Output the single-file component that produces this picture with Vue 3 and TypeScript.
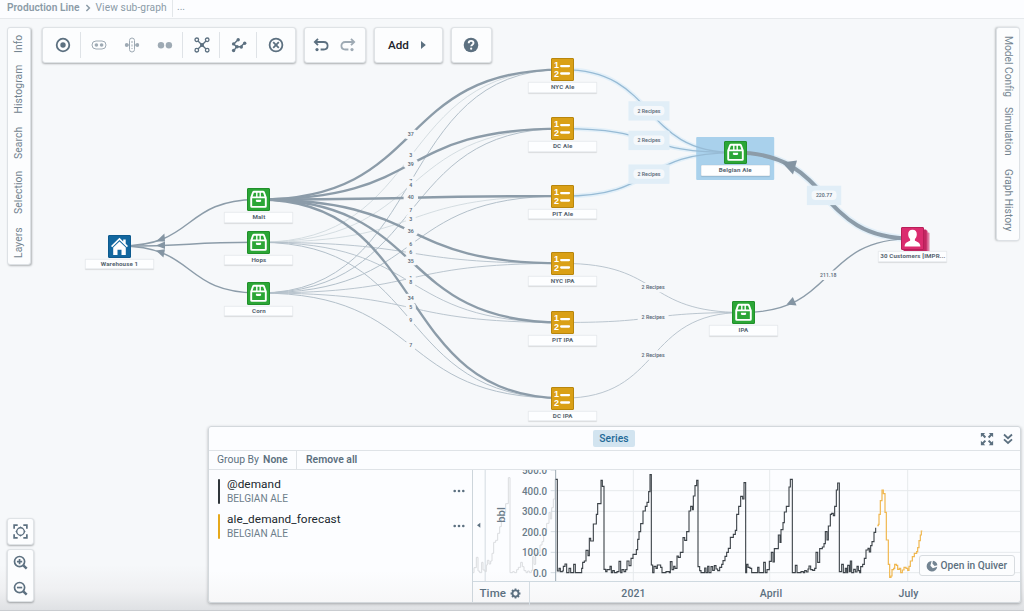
<script setup lang="ts">
type Kind = 'home' | 'box' | 'recipe' | 'user'
interface GraphNode { id: string; label: string; kind: Kind; x: number; y: number }

const nodes: GraphNode[] = [
  { id: 'wh', label: 'Warehouse 1', kind: 'home', x: 119.5, y: 246 },
  { id: 'malt', label: 'Malt', kind: 'box', x: 258.9, y: 199.5 },
  { id: 'hops', label: 'Hops', kind: 'box', x: 258.9, y: 242.3 },
  { id: 'corn', label: 'Corn', kind: 'box', x: 258.9, y: 293 },
  { id: 'nycAle', label: 'NYC Ale', kind: 'recipe', x: 562.7, y: 69.6 },
  { id: 'dcAle', label: 'DC Ale', kind: 'recipe', x: 562.7, y: 128.6 },
  { id: 'pitAle', label: 'PIT Ale', kind: 'recipe', x: 562.7, y: 196.1 },
  { id: 'nycIpa', label: 'NYC IPA', kind: 'recipe', x: 562.7, y: 263.4 },
  { id: 'pitIpa', label: 'PIT IPA', kind: 'recipe', x: 562.7, y: 322.5 },
  { id: 'dcIpa', label: 'DC IPA', kind: 'recipe', x: 562.7, y: 398.2 },
  { id: 'belgian', label: 'Belgian Ale', kind: 'box', x: 735.2, y: 152.6 },
  { id: 'ipa', label: 'IPA', kind: 'box', x: 743.5, y: 312.5 },
  { id: 'cust', label: '30 Customers [IMPR...', kind: 'user', x: 912.9, y: 238.6 },
]

interface Edge { from: string; to: string; w: number; label?: string; tone: string; glow?: boolean }
const edges: Edge[] = [
  { from: 'wh', to: 'malt', w: 1.5, tone: 'strong' },
  { from: 'wh', to: 'hops', w: 1.5, tone: 'strong' },
  { from: 'wh', to: 'corn', w: 1.5, tone: 'strong' },
  { from: 'hops', to: 'nycAle', w: 0.8, label: '3', tone: 'faint' },
  { from: 'corn', to: 'nycAle', w: 1, label: '7', tone: 'light' },
  { from: 'hops', to: 'dcAle', w: 0.8, label: '4', tone: 'faint' },
  { from: 'corn', to: 'dcAle', w: 1, label: '7', tone: 'light' },
  { from: 'hops', to: 'pitAle', w: 0.8, label: '3', tone: 'faint' },
  { from: 'corn', to: 'pitAle', w: 1, label: '6', tone: 'light' },
  { from: 'hops', to: 'nycIpa', w: 0.9, label: '6', tone: 'light' },
  { from: 'corn', to: 'nycIpa', w: 0.9, label: '1', tone: 'light' },
  { from: 'hops', to: 'pitIpa', w: 0.9, label: '8', tone: 'light' },
  { from: 'corn', to: 'pitIpa', w: 0.9, label: '5', tone: 'light' },
  { from: 'hops', to: 'dcIpa', w: 1, label: '9', tone: 'light' },
  { from: 'corn', to: 'dcIpa', w: 1, label: '7', tone: 'light' },
  { from: 'malt', to: 'nycAle', w: 2.4, label: '37', tone: 'strong' },
  { from: 'malt', to: 'dcAle', w: 2.4, label: '39', tone: 'strong' },
  { from: 'malt', to: 'pitAle', w: 2.4, label: '40', tone: 'strong' },
  { from: 'malt', to: 'nycIpa', w: 2.4, label: '36', tone: 'strong' },
  { from: 'malt', to: 'pitIpa', w: 2.4, label: '35', tone: 'strong' },
  { from: 'malt', to: 'dcIpa', w: 2.4, label: '34', tone: 'strong' },
  { from: 'nycAle', to: 'belgian', w: 1.3, label: '2 Recipes', tone: 'blue', glow: true },
  { from: 'dcAle', to: 'belgian', w: 1.3, label: '2 Recipes', tone: 'blue', glow: true },
  { from: 'pitAle', to: 'belgian', w: 1.3, label: '2 Recipes', tone: 'blue', glow: true },
  { from: 'nycIpa', to: 'ipa', w: 0.9, label: '2 Recipes', tone: 'light' },
  { from: 'pitIpa', to: 'ipa', w: 0.9, label: '2 Recipes', tone: 'light' },
  { from: 'dcIpa', to: 'ipa', w: 0.9, label: '2 Recipes', tone: 'light' },
  { from: 'belgian', to: 'cust', w: 4, label: '220.77', tone: 'strong', glow: true },
  { from: 'ipa', to: 'cust', w: 1.4, label: '211.18', tone: 'strong' },
]

const byId = Object.fromEntries(nodes.map((n) => [n.id, n])) as Record<string, GraphNode>
const BEND = 0.56
const links = edges.map((e) => {
  const a = byId[e.from]
  const b = byId[e.to]
  const dx = (b.x - a.x) * BEND
  const text = e.label ?? ''
  const wide = text === '2 Recipes'
  return {
    ...e,
    text,
    wide,
    d: `M${a.x} ${a.y}C${a.x + dx} ${a.y} ${b.x - dx} ${b.y} ${b.x} ${b.y}`,
    mx: (a.x + b.x) / 2,
    my: (a.y + b.y) / 2 - 0.5,
    half: wide ? 15.5 : text.length > 2 ? 12.5 : text.length === 2 ? 7.2 : 5,
    tl: wide ? 23 : text.length === 6 ? 16.3 : text.length === 2 ? 6 : 3,
  }
})
const glowing = links.filter((l) => l.glow)
const labelled = links.filter((l) => l.text)
const arrows = [
  '156,241.6 164.4,233.4 165,241.6',
  '156,245.5 165,241.4 165,249',
  '156,250.4 165,249.2 163.4,257.6',
  '782,162.5 797,160.6 793,174.4',
  '786.5,304.4 792.8,297 796.6,305.4',
]

const leftTabs = [
  { t: 'Info', h: 17 }, { t: 'Histogram', h: 47.5 }, { t: 'Search', h: 32 }, { t: 'Selection', h: 42 }, { t: 'Layers', h: 31 },
]
const rightTabs = [
  { t: 'Model Config', h: 58.5 }, { t: 'Simulation', h: 49 }, { t: 'Graph History', h: 63 },
]
const series = [
  { name: '@demand', item: 'BELGIAN ALE', cls: 'dark' },
  { name: 'ale_demand_forecast', item: 'BELGIAN ALE', cls: 'gold' },
]

/* Each pair is the x where a step starts and its height on the plot grid. */
type Step = [number, number]
const stepPath = (pts: Step[]): string =>
  `M${pts[0][0]} ${pts[0][1]}` + pts.slice(1).map(([x, y]) => `H${x}V${y}`).join('')

const past: Step[] = [
  [39, 443], [42, 428], [49, 397], [54, 438], [59, 443], [65, 412], [69, 435], [75, 440], [79, 420], [82, 406], [87, 417],
  [92, 408], [96, 385], [101, 352], [107, 346], [113, 325], [119, 305], [124, 280], [130, 262], [137, 236], [145, 158],
  [150, 443], [158, 440], [163, 443], [170, 434], [175, 427], [182, 412], [187, 425], [192, 437], [198, 443], [203, 438],
  [208, 443], [214, 436], [218, 395], [222, 418], [227, 387], [234, 383], [240, 360], [246, 350], [251, 330], [257, 320],
  [260, 295], [267, 262], [271, 282], [275, 248], [280, 222], [285, 163], [289, 163],
]
const demand: Step[] = [
  [287, 163], [292, 438], [297, 430], [301, 440], [307, 438], [310, 424], [315, 417], [320, 443], [327, 430], [332, 443],
  [337, 443], [341, 418], [346, 443], [365, 430], [368, 412], [373, 408], [378, 376], [384, 392], [388, 340], [392, 348],
  [400, 297], [409, 268], [413, 236], [423, 166], [427, 184], [432, 433], [437, 440], [441, 434], [450, 424], [454, 443],
  [458, 437], [463, 443], [471, 440], [477, 409], [482, 443], [486, 434], [492, 440], [497, 434], [501, 408], [507, 422],
  [513, 400], [519, 388], [529, 374], [533, 343], [537, 320], [542, 296], [549, 258], [556, 244], [561, 232], [566, 200],
  [570, 149], [574, 420], [578, 443], [582, 424], [588, 430], [592, 420], [602, 427], [606, 443], [618, 440], [628, 443],
  [631, 410], [636, 434], [641, 424], [645, 430], [651, 393], [655, 397], [661, 382], [669, 338], [674, 346], [680, 320],
  [687, 258], [692, 244], [697, 254], [700, 213], [705, 182], [710, 166], [714, 425], [719, 437], [723, 443], [734, 429],
  [738, 443], [743, 424], [747, 443], [753, 425], [758, 436], [763, 422], [768, 432], [773, 437], [779, 427], [785, 418],
  [789, 407], [795, 394], [800, 382], [805, 370], [811, 337], [820, 328], [826, 316], [830, 268], [836, 244], [842, 214],
  [848, 222], [852, 173], [857, 443], [860, 418], [864, 427], [870, 430], [875, 443], [893, 427], [897, 443], [911, 412],
  [916, 443], [921, 434], [928, 409], [934, 382], [939, 411], [943, 371], [955, 330], [960, 352], [963, 314], [969, 293],
  [973, 261], [979, 244], [987, 186], [991, 163], [997, 443], [1006, 421], [1011, 443], [1023, 440], [1030, 443],
  [1034, 437], [1039, 441], [1044, 432], [1047, 423], [1052, 434], [1058, 436], [1064, 430], [1068, 382], [1073, 412],
  [1079, 371], [1087, 366], [1092, 356], [1096, 320], [1101, 345], [1105, 303], [1111, 268], [1115, 265], [1120, 272],
  [1124, 244], [1129, 195], [1133, 174], [1138, 440], [1145, 418], [1150, 443], [1156, 430], [1160, 443], [1163, 421],
  [1168, 440], [1171, 408], [1175, 443], [1181, 433], [1186, 441], [1191, 424], [1195, 437], [1199, 443], [1202, 425],
  [1208, 418], [1213, 400], [1218, 375], [1224, 370], [1228, 381], [1232, 362], [1236, 350], [1242, 322], [1247, 308],
]
const forecast: Step[] = [
  [1252, 302], [1255, 298], [1257, 268], [1261, 227], [1266, 195], [1270, 206], [1275, 262], [1279, 345], [1285, 418],
  [1289, 457], [1293, 453], [1296, 434], [1301, 430], [1304, 418], [1309, 421], [1313, 433], [1318, 430], [1322, 443],
  [1327, 435], [1332, 427], [1338, 430], [1343, 436], [1347, 424], [1351, 408], [1357, 395], [1363, 385], [1370, 380],
  [1373, 368], [1377, 347], [1381, 330], [1384, 318], [1387, 318],
]
const yTicks = [
  { y: 135.5, t: '500.0' }, { y: 197, t: '400.0' }, { y: 259, t: '300.0' },
  { y: 320, t: '200.0' }, { y: 382, t: '100.0' }, { y: 443, t: '0.0' },
]
const xGrid = [520, 929, 1343]
</script>

<template>
  <div class="app">
    <header class="crumbs">
      <span class="bold c1">Production Line</span>
      <svg class="chev" viewBox="0 0 6 8"><path d="M1.4 1l3 3-3 3" /></svg>
      <span class="c2">View sub-graph</span>
      <span class="more">...</span>
    </header>

    <main class="canvas">
      <svg class="wires" viewBox="0 0 1024 611">
        <path v-for="(l, i) in glowing" :key="'g' + i" :d="l.d" class="halo" :stroke-width="l.w + 3.2" />
        <rect class="selection" x="696.200" y="137" width="78" height="43" rx="1" />
        <path v-for="(l, i) in links" :key="i" :d="l.d" :class="['edge', l.tone]" :stroke-width="l.w" />
        <polygon v-for="a in arrows" :key="a" :points="a" class="arrow" />
        <g v-for="(l, i) in labelled" :key="'t' + i">
          <rect v-if="l.glow" class="plate" :x="l.mx - (l.wide ? 20.5 : 17.2)" :y="l.my - 9.4" :width="l.wide ? 41 : 34.4" height="19.4" />
          <rect class="pill" :class="{ lit: l.glow }" :x="l.mx - l.half" :y="l.my - 4.5" :width="l.half * 2" height="9.4" rx="4" />
          <text class="wt" :x="l.mx" :y="l.my + 2" text-anchor="middle" :textLength="l.tl" lengthAdjust="spacingAndGlyphs">{{ l.text }}</text>
        </g>
      </svg>

      <div v-for="n in nodes" :key="n.id" :class="['node', n.kind]" :style="{ left: n.x + 'px', top: n.y + 'px' }">
        <div class="glyph">
          <svg v-if="n.kind === 'home'" viewBox="0 0 23 23">
            <path fill="#fff" d="M11.500 2.800L3 11l1.200 1.200 7.300-7.100 7.300 7.100L20 11l-2.300-2.300V4.400h-2.500v2z" />
            <path fill="#fff" d="M11.500 6.400L5.200 12.400v7.600h4.300v-5.300h4V20h4.300v-7.600z" />
          </svg>
          <svg v-else-if="n.kind === 'box'" viewBox="0 0 23 23">
            <path fill="none" stroke="#fff" stroke-width="1.900" stroke-linejoin="round" d="M4.200 9.600L6.100 4.200q.3-.4.800-.4h9.200q.5 0 .8.400l1.900 5.400v8.600q0 .7-.7.700H4.900q-.7 0-.7-.7zM4.200 9.400h14.600" />
            <path stroke="#fff" stroke-width="1.400" d="M9.800 4v5M13.200 4v5" />
            <path fill="#fff" d="M8.900 11.700h5.200v1.900q-2.600 1-5.200 0z" />
          </svg>
          <svg v-else-if="n.kind === 'recipe'" viewBox="0 0 23 23">
            <text x="5.400" y="10.300" text-anchor="middle" class="num">1</text>
            <text x="5.400" y="19" text-anchor="middle" class="num">2</text>
            <path stroke="#fff" stroke-width="2.300" stroke-linecap="round" d="M10.200 8.100h7.800M10.200 15.500h7.800" />
          </svg>
          <svg v-else viewBox="0 0 23 23">
            <path fill="#fff" d="M11.500 2.800c2.900 0 4.400 2 4.300 4.600-.1 2.200-.9 3.600-1.900 4.700v1.600c2 1 5.300 1.500 5.500 5.800H3.600c.2-4.300 3.500-4.800 5.500-5.800v-1.600C8.100 11 7.300 9.600 7.200 7.400c-.1-2.600 1.400-4.600 4.300-4.600z" />
          </svg>
        </div>
        <div class="tag">{{ n.label }}</div>
      </div>
    </main>

    <nav class="rail left">
      <span v-for="t in leftTabs" :key="t.t" :style="{ height: t.h + 'px' }">{{ t.t }}</span>
    </nav>
    <nav class="rail right">
      <span v-for="t in rightTabs" :key="t.t" :style="{ height: t.h + 'px' }">{{ t.t }}</span>
    </nav>

    <div class="toolbars">
      <div class="card tools">
        <div class="cell first"><svg viewBox="0 0 16 16"><circle cx="8" cy="8" r="6.300" class="ln w2" /><circle cx="8" cy="8" r="2.700" class="fl" /></svg></div>
        <div class="cell trio">
          <svg viewBox="0 0 16 16"><rect x="1" y="4" width="14" height="8" rx="4" class="ln" /><circle cx="5.400" cy="8" r="1.800" class="fl" /><circle cx="10.600" cy="8" r="1.800" class="fl" /></svg>
          <svg viewBox="0 0 16 16"><rect x="5.500" y="1" width="5" height="14" rx="2.500" class="ln" /><path d="M3 8h2M11 8h2M8 4v8" class="ln" stroke-dasharray="2 1.500" /><circle cx="2.700" cy="8" r="1.900" class="fl" /><circle cx="13.300" cy="8" r="1.900" class="fl" /></svg>
          <svg viewBox="0 0 16 16"><circle cx="4" cy="8.200" r="3.200" class="fl" /><circle cx="11.900" cy="8.200" r="3.200" class="fl" /></svg>
        </div>
        <div class="cell w37"><svg viewBox="0 0 16 16"><path d="M3.500 3.500l9 9M12.500 3.500l-9 9" class="ln w15" /><g class="ln hollow"><circle cx="2.800" cy="2.800" r="1.800" /><circle cx="13.200" cy="2.800" r="1.800" /><circle cx="2.800" cy="13.200" r="1.800" /><circle cx="13.200" cy="13.200" r="1.800" /></g><circle cx="8" cy="8" r="2" class="fl" /></svg></div>
        <div class="cell w37"><svg viewBox="0 0 16 16"><path d="M7 2.800L2.800 7l2.700 2.800-2.800 4M5.500 9.800h4.300l3.600-3.800" class="ln w15" /><g class="fl"><circle cx="7.200" cy="2.700" r="1.700" /><circle cx="2.600" cy="6.900" r="1.700" /><circle cx="6" cy="9.800" r="1.800" /><circle cx="2.600" cy="13.500" r="1.700" /><circle cx="10.300" cy="10" r="1.700" /><circle cx="13.700" cy="6.200" r="1.700" /></g></svg></div>
        <div class="cell w37"><svg viewBox="0 0 16 16"><circle cx="8" cy="8" r="6.400" class="ln w2" /><path d="M5.200 5.200l5.600 5.600M10.800 5.200l-5.600 5.600" class="ln w2" /></svg></div>
      </div>
      <div class="card hist">
        <svg viewBox="0 0 16 16"><path d="M5 1.800L1.800 5 5 8.200M2.200 5h8.500c2.500 0 3.900 1.500 3.900 3.800s-1.500 3.700-3.900 3.700H7.600" class="ln w2" /><circle cx="4" cy="12.600" r="1.600" class="fl" /></svg>
        <svg class="dim" viewBox="0 0 16 16"><path d="M11 1.800L14.200 5 11 8.200M13.800 5H5.300C2.800 5 1.400 6.500 1.400 8.800s1.500 3.700 3.900 3.700h3.100" class="ln w2" /><circle cx="12" cy="12.600" r="1.600" class="fl" /></svg>
      </div>
      <div class="card add"><span>Add</span><svg viewBox="0 0 5 8"><path d="M0 0l4.800 4L0 8z" class="fl" /></svg></div>
      <div class="card help"><svg viewBox="0 0 16 16"><circle cx="8" cy="8" r="7.300" class="fl" /><path d="M5.700 6.200c0-1.600 1-2.300 2.400-2.300s2.400.8 2.400 2.100c0 1.700-2.300 1.700-2.300 3.300" class="mark" /><circle cx="8.150" cy="11.700" r="1.100" fill="#fff" /></svg></div>
    </div>

    <div class="zoomers">
      <div class="card"><svg viewBox="0 0 16 16"><path d="M1.200 5V1.200H5M11 1.200h3.800V5M14.800 11v3.800H11M5 14.800H1.200V11" class="ln w2" /><circle cx="8" cy="8" r="4" class="ln w15" /><path d="M6.500 4.200L8 2.500l1.500 1.700zM6.500 11.800L8 13.500l1.500-1.700zM4.200 6.500L2.500 8l1.700 1.500zM11.800 6.500L13.500 8l-1.700 1.500z" class="fl" /></svg></div>
      <div class="card two">
        <svg viewBox="0 0 16 16"><circle cx="7" cy="7" r="5.400" class="ln w2" /><path d="M11 11l3.600 3.600" class="ln w3" /><path d="M7 4.200v5.600M4.200 7h5.600" class="ln w2" /></svg>
        <svg viewBox="0 0 16 16"><circle cx="7" cy="7" r="5.400" class="ln w2" /><path d="M11 11l3.600 3.600" class="ln w3" /><path d="M4.200 7h5.600" class="ln w2" /></svg>
      </div>
    </div>

    <section class="panel">
      <div class="head">
        <span class="chip">Series</span>
        <div class="acts">
          <svg viewBox="0 0 16 16"><path d="M1 6V1h5L4.300 2.700 7 5.300 5.300 7 2.700 4.300zM15 6V1h-5l1.700 1.700L9 5.300 10.700 7l2.600-2.700zM1 10v5h5l-1.700-1.700L7 10.700 5.300 9l-2.600 2.700zM15 10v5h-5l1.700-1.700L9 10.700 10.700 9l2.600 2.700z" class="fl" /></svg>
          <svg class="dbl" viewBox="0 0 12 12"><path d="M2 1.500l4 3.700 4-3.700M2 6.300L6 10l4-3.700" class="ln w2" /></svg>
        </div>
      </div>
      <div class="sub">
        <div class="group">Group By <b>None</b></div>
        <div class="remove">Remove all</div>
      </div>
      <div class="body">
        <div class="entries">
          <div v-for="s in series" :key="s.name" class="row">
            <i :class="s.cls"></i>
            <div class="names"><div class="name">{{ s.name }}</div><div class="item">{{ s.item }}</div></div>
            <svg class="dots" viewBox="0 0 12 4"><circle cx="1.700" cy="2" r="1.300" /><circle cx="6" cy="2" r="1.300" /><circle cx="10.300" cy="2" r="1.300" /></svg>
          </div>
        </div>
        <div class="plot">
          <svg class="chart" viewBox="39 135 1641 333" preserveAspectRatio="none">
            <path d="M75.500 135V468" class="axis" />
            <path :d="stepPath(past)" class="past" />
            <g class="grid">
              <path v-for="t in yTicks.slice(1)" :key="t.t" :d="`M287 ${t.y}H1680`" />
              <path v-for="x in xGrid" :key="x" :d="`M${x} 135V468`" />
            </g>
            <path v-for="t in yTicks" :key="'k' + t.t" :d="`M272 ${t.y}H287`" class="axis" />
            <path d="M287 135V468" class="axis strong" />
            <path d="M61 293v15l-10-7.500z" class="fl" />
            <text v-for="t in yTicks" :key="'y' + t.t" x="261" :y="t.y + 11.500" text-anchor="end" class="yt" :textLength="t.t === '0.0' ? 42 : 75" lengthAdjust="spacingAndGlyphs">{{ t.t }}</text>
            <text class="yt" transform="translate(134 270) rotate(-90)" text-anchor="middle" textLength="47" lengthAdjust="spacingAndGlyphs">bbl</text>
            <path :d="stepPath(demand)" class="demand" />
            <path :d="stepPath(forecast)" class="forecast" />
          </svg>
          <div class="xaxis">
            <div class="time">Time
              <svg viewBox="0 0 16 16"><circle cx="8" cy="8" r="4.400" class="ln w3" /><path d="M8 .8v2.600M8 12.600v2.600M.8 8h2.600M12.600 8h2.600M2.900 2.900l1.900 1.900M11.200 11.200l1.900 1.900M13.100 2.900l-1.900 1.900M4.800 11.200l-1.900 1.900" class="ln w3" /></svg>
            </div>
            <div class="months"><span>2021</span><span>April</span><span>July</span></div>
          </div>
          <button class="quiver">
            <svg viewBox="0 0 12 12"><path d="M5.600.9A5.300 5.300 0 1 0 11.200 6.800L6.800 8.200 4.400 5.800z" class="fl" /><path d="M6.900.7a5.300 5.300 0 0 1 4.500 4.500L8.600 6 6.400 3.600z" class="fl" /></svg>
            <span>Open in Quiver</span>
          </button>
        </div>
      </div>
    </section>
  </div>
</template>

<style>
html, body { margin: 0; overflow: hidden; }
</style>

<style scoped>
.app { position: relative; width: 1024px; height: 611px; overflow: hidden; font-family: Roboto, "Noto Sans", sans-serif; color: #5c7080;
  background: linear-gradient(to bottom, #f6f8fa 0, #f6f8fa 565px, #eff0f2 590px, #dfe1e4 610px, #c9ccd0 610px); }
.app * { box-sizing: border-box; }
.bold, b { font-weight: 600; }
svg { display: block; flex: none; }
.fl { fill: #5c7080; stroke: none; }
.ln { fill: none; stroke: #5c7080; stroke-width: 1; }
.w15 { stroke-width: 1.4; }
.w2 { stroke-width: 1.8; }
.w3 { stroke-width: 2.6; }
.hollow circle { fill: #fcfdfe; stroke-width: 1.3; }
.dim { opacity: 0.58; }

.crumbs { display: flex; align-items: center; height: 18.5px; border-bottom: 1px solid #e6e9ec; background: #fcfdff; color: #8b9ba7; font-size: 10.2px; line-height: 16px; padding: 0 0 2px 7px; white-space: nowrap; }
.c1 { width: 73px; letter-spacing: 0.03px; }
.c2 { width: 72px; letter-spacing: 0.1px; }
.chev { width: 6px; height: 8px; margin: 0 5px 0 4.5px; }
.chev path { fill: none; stroke: #8b9ba7; stroke-width: 1.5; }
.more { border-left: 1px solid #e3e7ea; height: 18px; padding-left: 4px; margin-left: 4.5px; }

.wires { position: absolute; left: 0; top: 0; width: 1024px; height: 611px; }
.selection { fill: #a9d1ec; }
.halo { fill: none; stroke: #e3f0f9; }
.edge { fill: none; stroke: #8c9ca9; }
.edge.light { stroke: #b3c0ca; }
.edge.faint { stroke: #ccd5db; }
.edge.blue { stroke: #97bbd5; }
.arrow { fill: #8495a3; }
.plate { fill: #e1eef7; }
.pill { fill: #f6f8fa; }
.pill.lit { fill: #f5f8fb; }
.wt { font-size: 5.4px; font-weight: 600; fill: #5f6f7c; }

.node { position: absolute; width: 0; height: 0; }
.glyph { position: absolute; left: -11.5px; top: -11.5px; width: 23px; height: 23px; border: 1px solid; border-radius: 1px; }
.glyph svg { width: 23px; height: 23px; margin: -1px; }
.home .glyph { background: #12679f; border-color: #0d5a8e; }
.box .glyph { background: #2ba636; border-color: #21902b; }
.recipe .glyph { background: #daa016; border-color: #b8860c; }
.user .glyph { background: #db2c6f; border-color: #b81e58; box-shadow: 2.5px 2.5px 0 #c22762, 4px 3px 0 -0.5px #d2457c, 5.5px 5.5px 0 #dc7da3; }
.num { font-family: "Liberation Sans", Roboto, sans-serif; font-size: 9px; font-weight: 700; fill: #fff; }
.tag { position: absolute; left: -34.5px; top: 12.5px; width: 69px; height: 10.5px; border: 1px solid #eceff2; border-radius: 1px; background: #fdfeff; box-shadow: 0 0.5px 1px rgba(16, 22, 26, 0.12); text-align: center; font-size: 6.2px; line-height: 9.2px; font-weight: 700; color: #56646f; letter-spacing: 0.12px; white-space: nowrap; }

.rail { position: absolute; top: 27px; display: flex; flex-direction: column; width: 24px; background: #fcfdfe; border: 1px solid #dde1e5; border-radius: 3px; font-size: 10.3px; color: #72838f; align-items: center; padding-top: 8px; white-space: nowrap; }
.rail span { writing-mode: vertical-rl; line-height: 14px; }
.left { left: 7px; height: 238px; box-shadow: 1px 1px 2px rgba(16, 22, 26, 0.3); gap: 13px; letter-spacing: 0.1px; }
.left span { transform: rotate(180deg); }
.right { left: 996px; height: 214px; box-shadow: -1px 0 2px rgba(16, 22, 26, 0.25); gap: 12.5px; letter-spacing: -0.02px; }

.card { background: #fcfdfe; border-radius: 3px; border: 1px solid #dfe3e6; box-shadow: 0 1px 2px rgba(16, 22, 26, 0.32); }
.toolbars { position: absolute; left: 42px; top: 27px; display: flex; gap: 8px; height: 36px; }
.toolbars .card { display: flex; align-items: center; }
.toolbars svg { width: 16px; height: 16px; }
.tools { width: 253.5px; }
.cell { display: flex; align-items: center; justify-content: center; height: 26px; border-right: 1px solid #dfe3e7; }
.cell:last-child { border: 0; }
.first { width: 38px; padding-left: 2.5px; }
.w37 { width: 37px; padding-left: 1px; }
.trio { width: 102px; gap: 17px; padding-left: 1px; }
.trio svg { opacity: 0.58; }
.hist { width: 62.5px; justify-content: center; gap: 11px; }
.add { width: 68.5px; padding-left: 13px; color: #1c252c; font-size: 11.7px; font-weight: 500; }
.add svg { width: 5px; height: 8px; margin-left: 12px; }
.help { width: 41px; justify-content: center; }
.mark { fill: none; stroke: #fff; stroke-width: 1.9; }

.zoomers { position: absolute; left: 7px; top: 518px; display: flex; flex-direction: column; gap: 4px; }
.zoomers .card { width: 27px; height: 27px; display: flex; align-items: center; justify-content: center; }
.zoomers svg { width: 15px; height: 15px; }
.zoomers .two { height: 53px; flex-direction: column; gap: 11.5px; }

.panel { position: absolute; left: 208px; top: 426px; width: 813px; height: 177px; background: linear-gradient(to bottom, #fcfdff 82%, #f7f7f8); border: 1px solid #d3d8dc; border-radius: 3px; box-shadow: 0 1px 3px rgba(16, 22, 26, 0.3); display: flex; flex-direction: column; }
.head { flex: none; height: 24px; border-bottom: 1px solid #dfe3e7; display: flex; justify-content: center; padding: 3px 1px 0 0; position: relative; }
.chip { height: 17px; width: 42px; border-radius: 2px; background: #d2e4f0; color: #1f6997; font-size: 10.3px; font-weight: 500; line-height: 17px; text-align: center; letter-spacing: 0.1px; }
.acts { position: absolute; right: 6px; top: 5px; display: flex; gap: 8px; align-items: center; }
.acts svg { width: 14px; height: 14px; }
.acts .dbl { width: 12px; height: 12px; }
.sub { flex: none; height: 19px; border-bottom: 1px solid #dfe3e7; display: flex; font-size: 10.4px; line-height: 18px; white-space: nowrap; }
.group { width: 87.5px; padding-left: 8px; border-right: 1px solid #dfe3e7; }
.group b { margin-left: 1.5px; }
.remove { padding-left: 9.5px; font-weight: 600; }
.body { flex: 1; display: flex; min-height: 0; }
.entries { width: 263.5px; border-right: 1px solid #cdd5db; padding: 6px 7px 0 9px; }
.row { display: flex; height: 35.3px; padding-top: 0.5px; }
.row i { width: 2px; height: 25px; margin-top: 2px; border-radius: 1px; }
i.dark { background: #30363b; }
i.gold { background: #e6a91c; }
.names { flex: 1; padding-left: 7px; white-space: nowrap; }
.name { font-size: 11.8px; line-height: 14px; color: #20282e; letter-spacing: 0.06px; }
.item { font-size: 10.1px; line-height: 15px; color: #6d7e8b; }
.dots { width: 12px; height: 4px; margin-top: 12px; fill: #5c7080; }

.plot { position: relative; width: 547px; display: flex; flex-direction: column; }
.chart { width: 547px; height: 111px; overflow: hidden; }
.chart path { fill: none; vector-effect: non-scaling-stroke; }
.chart path.fl { fill: #5c7080; }
.axis { stroke: #d3dbe1; stroke-width: 1; }
.axis.strong { stroke: #9daab4; }
.grid path { stroke: #e6eaed; stroke-width: 1; }
.past { stroke: #dadcdf; stroke-width: 1; }
.demand { stroke: #3b4248; stroke-width: 1.1; }
.forecast { stroke: #f0b850; stroke-width: 1.2; }
.yt { font-size: 32px; font-weight: 500; fill: #6a7b88; }
.xaxis { display: flex; flex: 1; border-top: 1px solid #cfd9e0; font-size: 10.5px; font-weight: 500; line-height: 23px; }
.time { width: 57px; border-right: 1px solid #d5dde3; display: flex; align-items: center; gap: 4px; padding-left: 7px; font-size: 11.5px; letter-spacing: 0.1px; }
.time svg { width: 11px; height: 11px; }
.months { display: grid; grid-template-columns: 40px 40px 40px; column-gap: 97.5px; padding-left: 84px; flex: 1; text-align: center; letter-spacing: 0.1px; }
.quiver { position: absolute; left: 446px; top: 85px; width: 96px; height: 21px; background: #fcfdfe; border: 1px solid #d8dce0; border-radius: 3px; display: flex; align-items: center; padding: 0 0 0 6px; gap: 3px; font: 500 10.2px Roboto, sans-serif; color: #5c7080; white-space: nowrap; }
.quiver svg { width: 12px; height: 12px; opacity: 0.85; }
</style>
